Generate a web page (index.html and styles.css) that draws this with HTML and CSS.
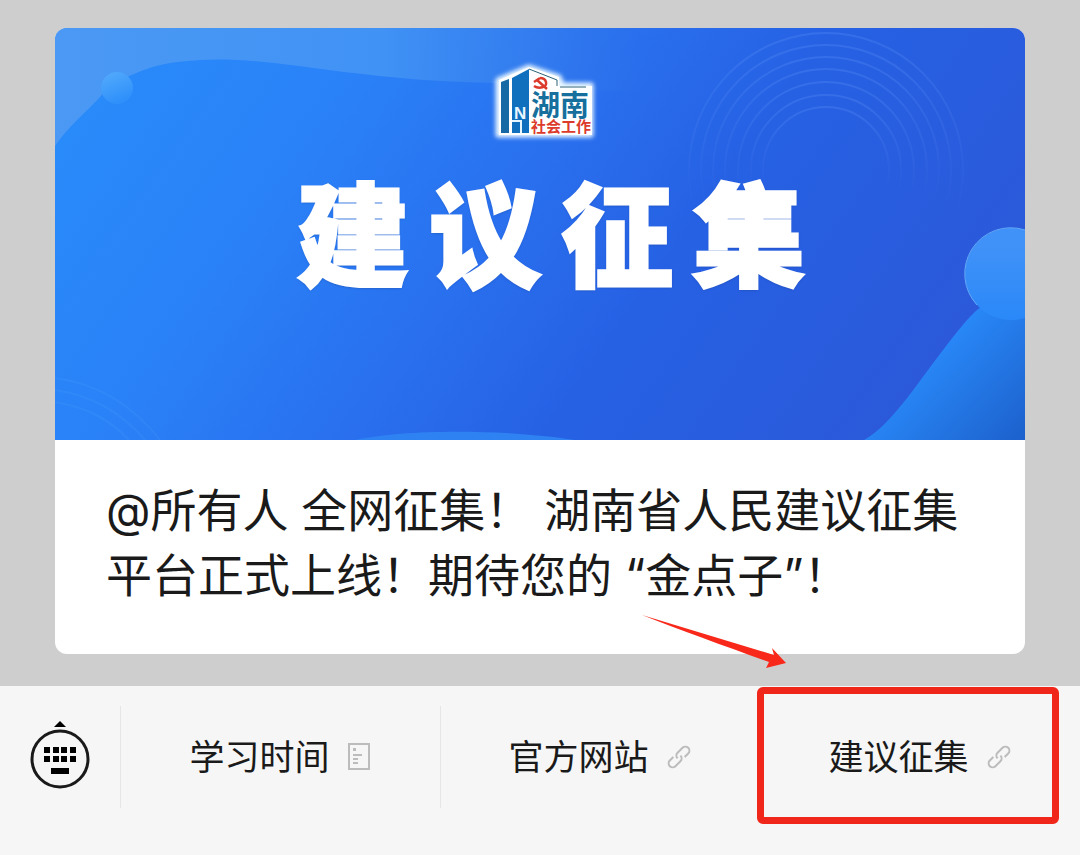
FILE: index.html
```html
<!DOCTYPE html>
<html lang="zh-CN">

<head>
  <meta charset="UTF-8" />
  <meta name="viewport" content="width=device-width, initial-scale=1.0" />
  <title>建议征集</title>
  <link rel="stylesheet" href="styles.css">
</head>

<body>
  <main class="chat">
    <article class="card">
      <div class="banner">
        <svg class="banner-art" viewBox="0 0 970 412" preserveAspectRatio="none" aria-hidden="true">
          <defs>
            <linearGradient id="base" x1="0" y1="0.2" x2="1" y2="0.5">
              <stop offset="0" stop-color="#298bfa" />
              <stop offset="0.25" stop-color="#2a82f8" />
              <stop offset="0.5" stop-color="#296fee" />
              <stop offset="0.68" stop-color="#2661e4" />
              <stop offset="1" stop-color="#2b59da" />
            </linearGradient>
            <linearGradient id="sky" x1="0" y1="0" x2="1" y2="0">
              <stop offset="0" stop-color="#4b99f4" />
              <stop offset="0.55" stop-color="#4092f5" />
              <stop offset="0.8" stop-color="#3880ee" stop-opacity="0.6" />
              <stop offset="1" stop-color="#3070e6" stop-opacity="0" />
            </linearGradient>
            <linearGradient id="swoosh" x1="0" y1="0" x2="1" y2="1">
              <stop offset="0.4" stop-color="#2a8bfb" />
              <stop offset="1" stop-color="#1c60cc" />
            </linearGradient>
            <linearGradient id="ball" x1="0" y1="0" x2="0" y2="1">
              <stop offset="0.2" stop-color="#4092f8" />
              <stop offset="1" stop-color="#2a88f8" />
            </linearGradient>
            <linearGradient id="dot" x1="0" y1="0" x2="0.4" y2="1">
              <stop offset="0" stop-color="#55acfb" />
              <stop offset="1" stop-color="#2f90fb" />
            </linearGradient>
            <linearGradient id="ring" x1="0" y1="0" x2="0" y2="1">
              <stop offset="0" stop-color="#5a90f5" stop-opacity="0.3" />
              <stop offset="0.65" stop-color="#5a90f5" stop-opacity="0" />
            </linearGradient>
          </defs>
          <rect width="970" height="412" fill="url(#base)" />
          <path d="M0 0H600V64C530 63 470 58 437 55C370 53 340 50 289 44C240 38 190 29 145 32C110 34 95 39 79 46C60 53 52 60 45 69C30 85 12 100 0 118Z" fill="url(#sky)" />
          <circle cx="62" cy="60" r="16" fill="url(#dot)" />
          <g fill="none" stroke="url(#ring)" stroke-width="2">
            <circle cx="771" cy="142" r="137" />
            <circle cx="771" cy="142" r="125" />
            <circle cx="771" cy="142" r="113" />
            <circle cx="771" cy="142" r="101" />
            <circle cx="771" cy="142" r="88" />
            <circle cx="771" cy="142" r="75" />
            <circle cx="771" cy="142" r="63" />
          </g>
          <g fill="none" stroke="#4aa0fb" stroke-opacity="0.2" stroke-width="2">
            <path d="M0 350C45 356 80 380 105 412" />
            <path d="M0 362C40 368 68 386 90 412" />
            <path d="M0 374C34 380 55 392 74 412" />
          </g>
          <path d="M300 412C350 401 450 401 520 412Z" fill="#2f82f2" />
          <path d="M809 412C835 398 862 356 882 330S910 293 922 282L970 246V412Z" fill="url(#swoosh)" />
          <circle cx="956" cy="246" r="46" fill="url(#ball)" />
          <path d="M922 277A46 46 0 0 1 970 202" fill="none" stroke="#62aaf8" stroke-width="1" />
        </svg>

        <svg class="logo" viewBox="0 0 130 100" role="img" aria-label="湖南社会工作">
          <defs>
            <filter id="glow" x="-20%" y="-20%" width="140%" height="140%">
              <feGaussianBlur stdDeviation="2" />
            </filter>
          </defs>
          <path d="M18 30L49 17L79 27L82 35H111V85H18Z" fill="#e8f6ff" stroke="#e8f6ff" stroke-width="5" stroke-linejoin="round" filter="url(#glow)" />
          <path d="M19 30L49 17L79 27V36H112V85H19Z" fill="#fff" />
          <path d="M21 32L29 29V83H21Z" fill="#1769a5" />
          <path d="M32 28L49 19V83H32Z" fill="#1170bd" />
          <path d="M32 71H41V83" fill="none" stroke="#e8f6ff" stroke-width="2" />
          <path d="M49 19L77 30V36M80 37H106" fill="none" stroke="#2b6377" stroke-width="1" />
          <text class="logo-letter" x="34" y="69">N</text>
          <g fill="none" stroke="#dc3b2c" stroke-width="2.5">
            <path d="M60 28C67 28 68 36 63 37C60 38 57 38 54 36" />
            <path d="M54 32L60 28M57 30L67 39" />
          </g>
          <text class="logo-name" x="51" y="66">湖南</text>
          <text class="logo-sub" x="51" y="82">社会工作</text>
        </svg>

        <h1 class="banner-title"><span>建</span><span>议</span><span>征</span><span>集</span></h1>
      </div>

      <p class="card-text">@所有人 全网征集！ 湖南省人民建议征集平台正式上线！期待您的 “金点子”！</p>

      <svg class="arrow" viewBox="0 0 150 60" aria-hidden="true">
        <path d="M2 3L134 43L132 36L146 51L126 56L129 50C90 36 40 18 2 3Z" fill="#f8281b" />
      </svg>
    </article>
  </main>

  <nav class="menu-bar">
    <button class="keyboard" type="button" aria-label="键盘">
      <svg width="62" height="70" viewBox="0 0 62 70">
        <path d="M31 1L37 7H25Z" />
        <circle cx="31" cy="39" r="28" fill="none" stroke="#1a1a1a" stroke-width="3" />
        <path d="M15 27h6v6h-6zM24 27h6v6h-6zM32 27h6v6h-6zM41 27h6v6h-6zM15 36h6v6h-6zM24 36h6v6h-6zM32 36h6v6h-6zM41 36h6v6h-6zM22 48h18v6h-18z" />
      </svg>
    </button>

    <button class="menu-item" type="button">
      <span>学习时间</span>
      <svg class="icon" width="22" height="28" viewBox="0 0 22 28">
        <path d="M1 1H21V26H1ZM5 12H14M5 16H10M5 20H10" />
        <path d="M5 5H8V8H5Z" fill="#bcbcbc" stroke="none" />
      </svg>
    </button>

    <a class="menu-item" href="#site">
      <span>官方网站</span>
      <svg class="icon" width="24" height="24" viewBox="0 0 24 24">
        <path transform="rotate(-45 12 12)" d="M8 8H3a4 4 0 0 0 0 8H10a4 4 0 0 0 4-4M16 16H21a4 4 0 0 0 0-8H14a4 4 0 0 0-4 4" />
      </svg>
    </a>

    <a class="menu-item marked" href="#suggest">
      <span>建议征集</span>
      <svg class="icon" width="24" height="24" viewBox="0 0 24 24">
        <path transform="rotate(-45 12 12)" d="M8 8H3a4 4 0 0 0 0 8H10a4 4 0 0 0 4-4M16 16H21a4 4 0 0 0 0-8H14a4 4 0 0 0-4 4" />
      </svg>
    </a>
  </nav>
</body>

</html>
```
FILE: styles.css
```css
* {
  box-sizing: border-box;
  margin: 0;
  padding: 0;
}

:root {
  --page-bg: #cecece;
  --bar-bg: #f6f6f6;
  --text-color: #1a1a1a;
  --icon-color: #bcbcbc;
  --mark-color: #f0261b;
}

body {
  min-height: 100vh;
  display: flex;
  flex-direction: column;
  background: var(--page-bg);
  color: var(--text-color);
  font-family: "Noto Sans", "Noto Sans CJK SC", sans-serif;
}

.chat {
  flex: 1;
  padding: 28px 55px 32px;
}

.card {
  position: relative;
  background: #fff;
  border-radius: 12px;
}

/* banner */
.banner {
  position: relative;
  display: flex;
  flex-direction: column;
  align-items: center;
  gap: 25px;
  aspect-ratio: 970 / 412;
  padding: 22px 0 0 10px;
  border-radius: 12px 12px 0 0;
  overflow: hidden;
}

.banner-art {
  position: absolute;
  inset: 0;
  width: 100%;
  height: 100%;
}

.logo {
  position: relative;
  width: 130px;
  height: 100px;
}

.logo-letter {
  font: bold 17px "Liberation Sans", sans-serif;
  fill: #e8f6ff;
}

.logo-name {
  font-size: 29px;
  font-weight: 700;
  fill: #166f9c;
}

.logo-sub {
  font-size: 15px;
  font-weight: 700;
  fill: #dc3b2c;
}

.banner-title {
  position: relative;
  display: flex;
  gap: 20px;
  padding-left: 12px;
  color: #fff;
  font-size: 112px;
  font-weight: 900;
  line-height: 120px;
  -webkit-text-stroke: 3px #fff;
  text-shadow: 0 1px 3px rgba(20, 50, 110, 0.7);
}

.card-text {
  padding: 38px 50px 46px 51px;
  font-family: Inter, "Noto Sans CJK SC", sans-serif;
  font-size: 46px;
  line-height: 65px;
}

.arrow {
  position: absolute;
  right: 235px;
  bottom: -18px;
  width: 150px;
  height: 60px;
}

/* bottom menu */
.menu-bar {
  display: flex;
  padding: 20px 0 47px;
  background: var(--bar-bg);
}

.keyboard {
  display: flex;
  align-items: center;
  justify-content: center;
  width: 120px;
  height: 102px;
  padding-bottom: 4px;
  border: none;
  background: none;
  cursor: pointer;
}

.menu-item {
  position: relative;
  flex: 1;
  display: flex;
  align-items: center;
  justify-content: center;
  gap: 18px;
  height: 102px;
  padding-right: 2px;
  border: none;
  border-left: 1px solid #e6e6e6;
  background: none;
  color: inherit;
  font-family: inherit;
  font-size: 35px;
  line-height: 52px;
  text-decoration: none;
  cursor: pointer;
}

.icon {
  fill: none;
  stroke: var(--icon-color);
  stroke-width: 2;
}

.marked {
  border-left-color: transparent;
}

.marked::after {
  content: "";
  position: absolute;
  inset: -19px 21px -16px -4px;
  border: 7px solid var(--mark-color);
  border-radius: 6px;
}
```
